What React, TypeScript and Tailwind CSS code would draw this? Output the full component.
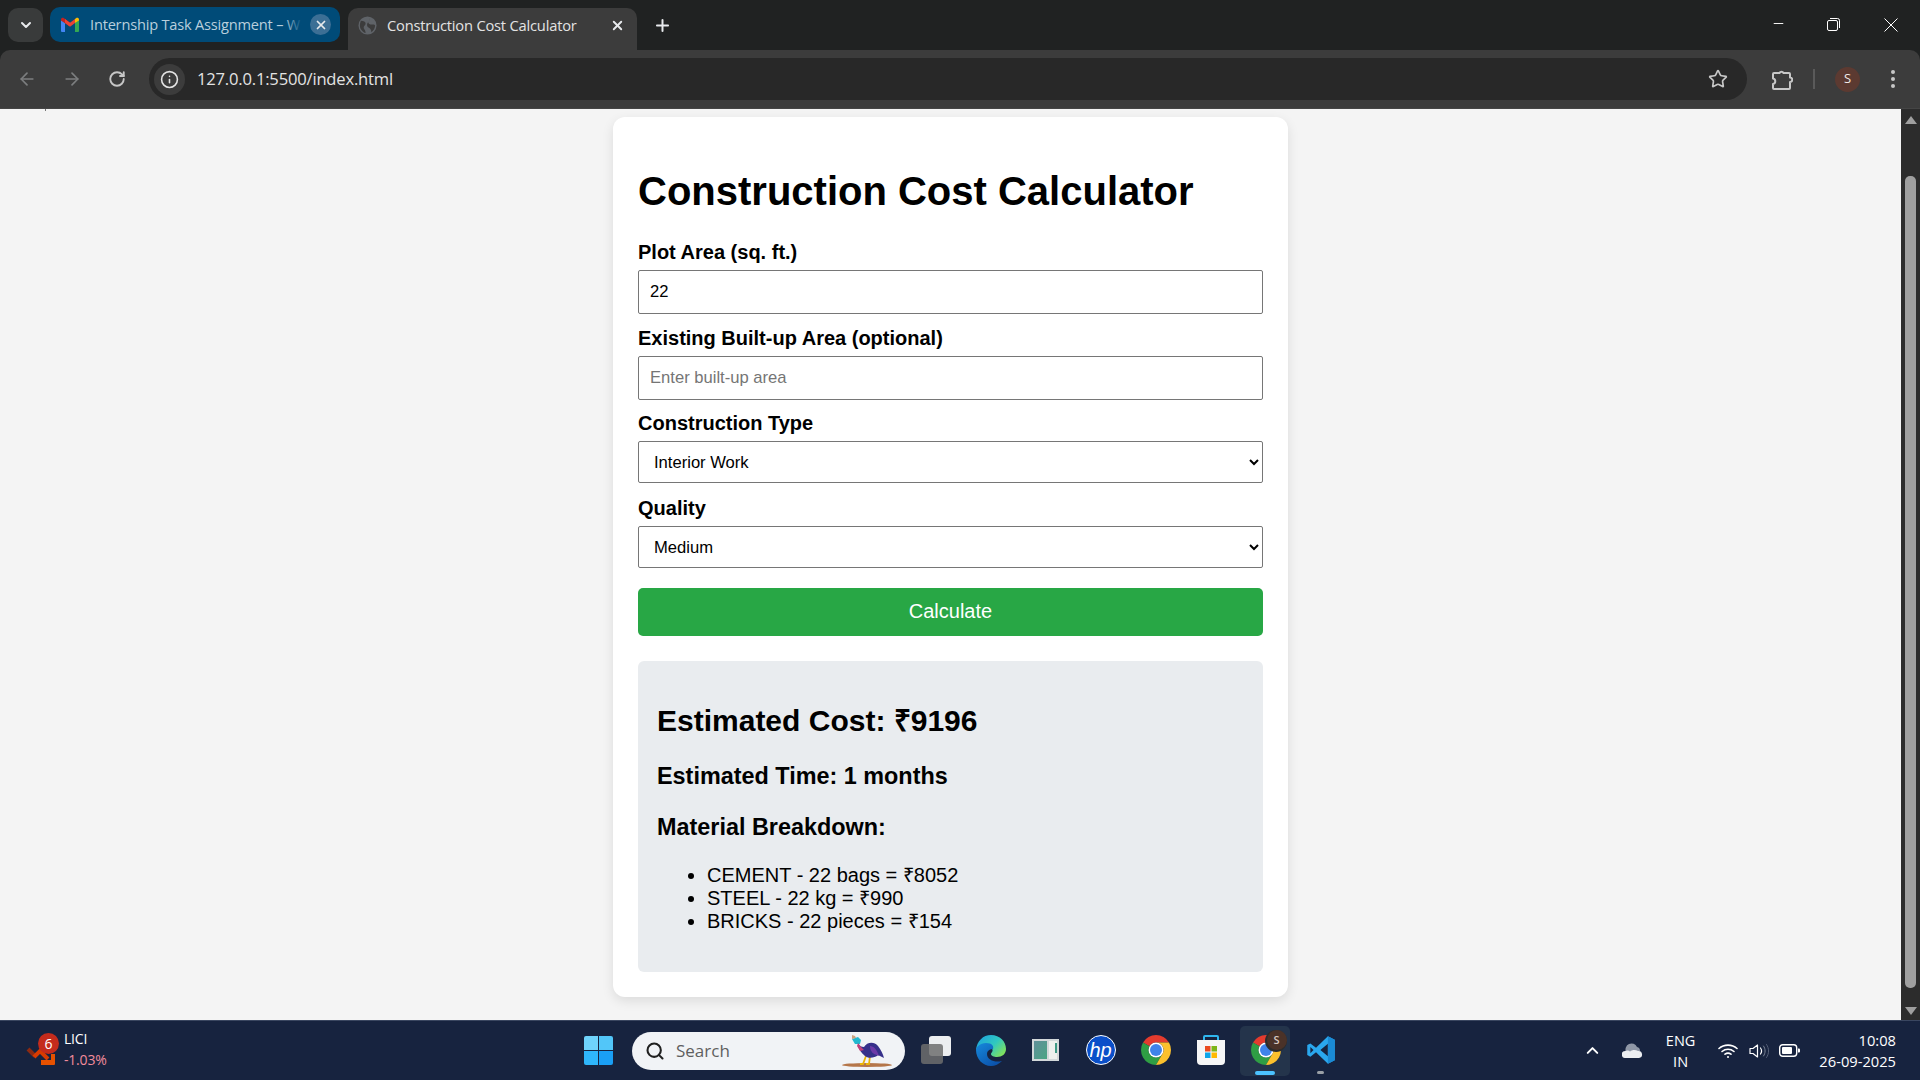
import { ChevronDown, X, Plus, ArrowLeft, ArrowRight, RotateCw, Info, Star, Minus, Search, ChevronUp } from 'lucide-react';

function GmailIcon() {
  return (
    <svg width="20" height="16" viewBox="0 0 20 16">
      <path d="M1 15V3l4 3v9H2a1 1 0 0 1-1-1z" fill="#4285f4" />
      <path d="M15 15V6l4-3v11a1 1 0 0 1-1 1z" fill="#34a853" />
      <path d="M1 3.500V2.500C1 1 2.800.3 4 1.200L10 5.800l-1 3z" fill="#c5221f" />
      <path d="M5 6 10 9.700 15 6V2l-5 3.800L5 2z" fill="#ea4335" />
      <path d="M15 2l1-.8C17.200.3 19 1 19 2.500v1L15 6z" fill="#fbbc04" />
    </svg>
  );
}

function GlobeIcon() {
  return (
    <svg width="19" height="19" viewBox="0 0 20 20">
      <circle cx="10" cy="10" r="9.500" fill="#5f6368" />
      <path d="M3 5c3 0 5 1 5 3s-2 2-2 4 2 2 2 6c-3-1-6-4-6-8 0-2 .5-3 1-5zM12 2c1 2 0 3-1 4s1 3 3 3 4 0 4 1c0 3-2 6-4 7 0-3-1-4-3-5s-2-4 0-6 1-3 1-4z" fill="#3c3c3c" />
    </svg>
  );
}

function PuzzleIcon() {
  return (
    <svg width="22" height="21" viewBox="0 0 22 21" fill="none" stroke="#c7c7c7" strokeWidth="2" strokeLinejoin="round">
      <path d="M3 4h5.500a2.200 2.200 0 0 1 4 0H18a1 1 0 0 1 1 1v3.500a2.200 2.200 0 0 1 0 4.500V19a1 1 0 0 1-1 1H3a1 1 0 0 1-1-1v-4a2.800 2.800 0 0 0 0-5.500V5a1 1 0 0 1 1-1z" />
    </svg>
  );
}

function ChromeIcon({ size }: { size: number }) {
  return (
    <svg width={size} height={size} viewBox="2 2 44 44">
      <path d="M4.950 13A22 22 0 0 1 43.050 13L24 13A11 11 0 0 0 14.470 18.500Z" fill="#e33b2e" />
      <path d="M24 46A22 22 0 0 1 4.950 13L14.470 18.500A11 11 0 0 0 33.530 29.500Z" fill="#2f9e44" />
      <path d="M43.050 13A22 22 0 0 1 24 46L33.530 29.500A11 11 0 0 0 24 13Z" fill="#fbc02d" />
      <circle cx="24" cy="24" r="11" fill="#fff" />
      <circle cx="24" cy="24" r="8.800" fill="#3f83ea" />
    </svg>
  );
}

function EdgeIcon() {
  return (
    <svg width="30" height="31" viewBox="0 0 30 31">
      <defs>
        <linearGradient id="edgeTop" x1="0" y1="0" x2="1" y2="0.700">
          <stop offset="0" stopColor="#1b9de2" />
          <stop offset="0.600" stopColor="#30c8c0" />
          <stop offset="1" stopColor="#7ee05f" />
        </linearGradient>
        <linearGradient id="edgeLow" x1="0" y1="0" x2="0.800" y2="1">
          <stop offset="0" stopColor="#1689dc" />
          <stop offset="1" stopColor="#0b4fa8" />
        </linearGradient>
      </defs>
      <path d="M0 15C1 6 7 0 15 0c9 0 15 6.500 15 14 0 5-4 8-9 8-3 0-6-1-6-3 0-1 1-1.500 1.500-3 .6-2-1.500-5-6-5C6 11 1 13 0 15z" fill="url(#edgeTop)" />
      <path d="M0 15c0-3 4-7 10-7 6 0 8 3 7 6-2 0-6 1-6 5 0 6 8 9 15 7-3 3-7 5-11 5C7 31 0 24 0 15z" fill="url(#edgeLow)" />
    </svg>
  );
}

function ExplorerIcon() {
  return (
    <div className="relative w-[30px] h-[28px]">
      <div className="absolute right-0 top-0 w-[22px] h-[20px] rounded-[3px] bg-[#eceef0]" />
      <div className="absolute left-0 bottom-0 w-[22px] h-[20px] rounded-[3px] bg-[#6d6d6d]/85" />
    </div>
  );
}

function WindowApp() {
  return (
    <div className="w-[27px] h-[22px] bg-[#d3d8da] p-[2px] flex gap-[2px]">
      <div className="flex-1 bg-gradient-to-br from-[#5f8f9a] to-[#49a583]" />
      <div className="w-[8px] bg-[#eef0ee] flex justify-end pt-[2px]">
        <div className="w-[2px] h-[10px] bg-[#3f9a86]" />
      </div>
    </div>
  );
}

function StoreIcon() {
  return (
    <svg width="30" height="32" viewBox="0 0 30 32">
      <path d="M8 7V3a1 1 0 0 1 1-1h12a1 1 0 0 1 1 1v4" fill="none" stroke="#2fb6ee" strokeWidth="2" />
      <path d="M1 6h28v21a4 4 0 0 1-4 4H5a4 4 0 0 1-4-4z" fill="#f6f6f6" />
      <rect x="9" y="12" width="5.500" height="5.500" fill="#ea4a1f" />
      <rect x="15.500" y="12" width="5.500" height="5.500" fill="#7cb518" />
      <rect x="9" y="18.500" width="5.500" height="5.500" fill="#0ea5e9" />
      <rect x="15.500" y="18.500" width="5.500" height="5.500" fill="#ffb900" />
    </svg>
  );
}

function VsCodeIcon() {
  return (
    <svg width="30" height="30" viewBox="0 0 24 24">
      <path fillRule="evenodd" d="M17.500 1 23 3.800v16.400L17.500 23 8 13.800l-4.500 3.500L1 16V8l2.500-1.300L8 10.200zM17.500 7 11.500 12l6 5zM3.500 9.500v5L6 12z" fill="#2aa7ee" />
      <path d="M17.500 1 23 3.800v16.400L17.500 23z" fill="#1a8ad4" />
    </svg>
  );
}

function WindowsIcon() {
  return (
    <div className="grid grid-cols-2 gap-[1px] w-[29px] h-[29px]">
      <div className="bg-[#6fd3fb] rounded-tl-[2px]" />
      <div className="bg-[#52c6f9] rounded-tr-[2px]" />
      <div className="bg-[#2fb6fb] rounded-bl-[2px]" />
      <div className="bg-[#1a9ff5] rounded-br-[2px]" />
    </div>
  );
}

function BirdIcon() {
  return (
    <svg width="54" height="36" viewBox="0 0 54 36">
      <ellipse cx="26" cy="32" rx="25" ry="2" fill="#b5764a" />
      <path d="M25 23l-3 8h-3M29 23l-1 8h-3" fill="none" stroke="#eab308" strokeWidth="1.800" />
      <path d="M17 10c2 3 3 4 6 4 3-5 10-6 14-1 3 4 5 8 6 12l-6-3c-3 3-10 4-13 1-4-3-6-7-7-11z" fill="#36308a" />
      <path d="M29 13c4 0 7 4 9 10l-5-2c-3-2-4-5-4-8z" fill="#6d3aa8" />
      <path d="M11 6l6-2 3 3-1 4-5 0z" fill="#22b8cf" />
      <path d="M11 2l3 1 1 2-4 1z" fill="#c9a27e" />
      <path d="M17 10l3 4 3 3-4 1-3-5z" fill="#c2417a" />
    </svg>
  );
}

function LiciIcon() {
  return (
    <svg width="30" height="20" viewBox="0 0 30 20" fill="none">
      <path d="M2 3l7 7" stroke="#8c2a12" strokeWidth="4" />
      <path d="M8 11l6-6 8 8" stroke="#d83b01" strokeWidth="4" />
      <path d="M25 8h4v10a1 1 0 0 1-1 1H15v-5h10z" fill="#e65100" />
    </svg>
  );
}

function CloudIcon() {
  return (
    <svg width="21" height="15" viewBox="0 0 21 15">
      <path d="M4 9a6 6 0 0 1 11-5 4 4 0 0 1 3 4z" fill="#8f97a6" />
      <path d="M3.500 15a3.500 3.500 0 0 1-.5-7c2-1 4-.5 5 .5 2-1.500 5-2 8-.5a3.500 3.500 0 0 1 1 7z" fill="#eceef1" />
    </svg>
  );
}

function WifiIcon() {
  return (
    <svg width="20" height="16" viewBox="0 0 20 16" fill="none" stroke="#fff" strokeWidth="1.600" strokeLinecap="round">
      <path d="M1 5.500C6 1 14 1 19 5.500" />
      <path d="M4 8.500c3.500-3 8.500-3 12 0" />
      <path d="M7 11.200c2-1.500 4-1.500 6 0" />
      <circle cx="10" cy="14" r="1" fill="#fff" stroke="none" />
    </svg>
  );
}

function VolumeIcon() {
  return (
    <svg width="21" height="16" viewBox="0 0 21 16" fill="none" strokeLinecap="round">
      <path d="M1 5.500h3L8.500 2v12L4 10.500H1z" stroke="#fff" strokeWidth="1.200" strokeLinejoin="round" />
      <path d="M11.500 5c1.300 1.800 1.300 4.200 0 6" stroke="#fff" strokeWidth="1.200" />
      <path d="M14.500 3c2.200 3 2.200 7 0 10" stroke="#7b8496" strokeWidth="1" />
      <path d="M17.500 1.500c2.800 4 2.800 9 0 13" stroke="#566078" strokeWidth="1" />
    </svg>
  );
}

function BatteryIcon() {
  return (
    <svg width="21" height="13" viewBox="0 0 21 13">
      <rect x="0.700" y="0.700" width="17" height="11.600" rx="3" fill="none" stroke="#fff" strokeWidth="1.400" />
      <rect x="3" y="3" width="10" height="7" rx="1" fill="#fff" />
      <path d="M19 4.500h1a1 1 0 0 1 1 1v2a1 1 0 0 1-1 1h-1z" fill="#fff" />
    </svg>
  );
}

function PinnedApp({ children, active, dot }: { children: React.ReactNode; active?: boolean; dot?: boolean }) {
  return (
    <div className="relative w-[55px] h-[50px] flex items-center justify-center">
      {active && <div className="absolute inset-y-0 left-[2px] right-[3px] bg-[#24344b] rounded-[5px]" />}
      <div className="relative flex items-center justify-center -mt-[1px]">{children}</div>
      {active && <div className="absolute bottom-[1px] left-[17px] w-[20px] h-[4px] rounded-full bg-[#4cc2ff]" />}
      {dot && <div className="absolute bottom-[2px] left-[24px] w-[7px] h-[3px] rounded-full bg-[#9aa0a6]" />}
    </div>
  );
}

function TabBar() {
  return (
    <div className="h-[50px] shrink-0 bg-[#202222] flex pl-[8px] font-['Open_Sans',sans-serif]">
      <div className="w-[35px] h-[34px] mt-[8px] rounded-[10px] bg-[#393b3b] flex items-center justify-center text-[#e8eaed]">
        <ChevronDown size={16} strokeWidth={3} />
      </div>
      <div className="w-[290px] h-[35px] mt-[7px] ml-[7px] rounded-[10px] bg-[#004b78] flex items-center pl-[10px] pr-[9px]">
        <GmailIcon />
        <span className="relative ml-[10px] w-[212px] overflow-hidden whitespace-nowrap text-[14.600px] text-[#b9cfdd] tracking-[-0.2px]">
          Internship Task Assignment – W
          <span className="absolute inset-y-0 right-0 w-[18px] bg-gradient-to-r from-transparent to-[#004b78]" />
        </span>
        <span className="ml-auto w-[21px] h-[21px] rounded-full bg-[#3c6f95] flex items-center justify-center text-[#e8eaed]">
          <X size={14} strokeWidth={3} />
        </span>
      </div>
      <div className="w-[289px] h-[42px] mt-[8px] ml-[8px] rounded-t-[10px] bg-[#3c3c3c] flex items-center pl-[10px] pr-[12px] pb-[7px]">
        <GlobeIcon />
        <span className="ml-[10px] whitespace-nowrap text-[14.700px] text-[#e3e3e3] tracking-[-0.2px]">Construction Cost Calculator</span>
        <X size={15} strokeWidth={3} className="ml-auto text-[#e8eaed]" />
      </div>
      <Plus size={19} strokeWidth={2.500} className="ml-[16px] mt-[16px] text-[#e8eaed]" />
      <div className="ml-auto flex items-start text-white">
        <Minus size={15} strokeWidth={1.500} className="mt-[16px] mr-[41px]" />
        <svg width="13" height="13" viewBox="0 0 13 13" className="mt-[18px] mr-[44px]" fill="none" stroke="#fff" strokeWidth="1">
          <rect x="0.500" y="2.500" width="10" height="10" rx="1.500" />
          <path d="M3 .5h7.500a2 2 0 0 1 2 2V10" />
        </svg>
        <svg width="14" height="14" viewBox="0 0 14 14" className="mt-[18px] mr-[22px]" stroke="#fff" strokeWidth="1">
          <path d="M.5.5l13 13M13.500.5l-13 13" />
        </svg>
      </div>
    </div>
  );
}

function Toolbar() {
  return (
    <div className="h-[59px] shrink-0 bg-[#202222] font-['Open_Sans',sans-serif]">
      <div className="h-full bg-[#3c3c3c] rounded-t-[10px] border-b border-[#454545] flex items-center">
        <ArrowLeft size={20} className="ml-[17px] text-[#7c7e7f]" />
        <ArrowRight size={20} className="ml-[25px] text-[#7c7e7f]" />
        <RotateCw size={18} strokeWidth={2.500} className="ml-[26px] text-[#c7c7c7]" />
        <div className="ml-[23px] w-[1598px] h-[42px] rounded-full bg-[#282828] flex items-center pl-[5px] pr-[19px]">
          <span className="w-[31px] h-[31px] rounded-full bg-[#3c3c3c] flex items-center justify-center text-[#e3e3e3]">
            <Info size={19} />
          </span>
          <span className="ml-[12px] text-[16.600px] text-[#e3e3e3] tracking-[-0.2px]">127.0.0.1:5500/index.html</span>
          <Star size={20} strokeWidth={2} className="ml-auto text-[#c7c7c7]" />
        </div>
        <div className="ml-[24px]"><PuzzleIcon /></div>
        <div className="ml-[20px] w-[2px] h-[20px] bg-[#5a5a5a]" />
        <div className="ml-[20px] w-[25px] h-[25px] rounded-full bg-[#5c3a31] flex items-center justify-center text-[13px] text-[#f1e9e6]">S</div>
        <div className="ml-[31px] flex flex-col gap-[3px]">
          <span className="w-[4px] h-[4px] rounded-full bg-[#c7c7c7]" />
          <span className="w-[4px] h-[4px] rounded-full bg-[#c7c7c7]" />
          <span className="w-[4px] h-[4px] rounded-full bg-[#c7c7c7]" />
        </div>
      </div>
    </div>
  );
}

function Field({ label, children, className }: { label: string; children: React.ReactNode; className?: string }) {
  return (
    <div className={className}>
      <label className="block h-[23px] leading-[23px] mb-[6px] text-[20px] font-bold text-black">{label}</label>
      {children}
    </div>
  );
}

function Calculator() {
  return (
    <div className="w-[675px] h-[880px] mx-auto mt-[8px] px-[25px] bg-white rounded-[12px] shadow-[0_4px_12px_rgba(0,0,0,0.1)] font-['Liberation_Sans',Arial,sans-serif] text-black">
      <h1 className="pt-[51px] text-[40px] leading-[46px] font-bold">Construction Cost Calculator</h1>
      <Field label="Plot Area (sq. ft.)" className="mt-[27px]">
        <input readOnly value="22" className="block w-full h-[44px] px-[11px] border border-[#767676] rounded-[2px] text-[16.600px] text-black" />
      </Field>
      <Field label="Existing Built-up Area (optional)" className="mt-[13px]">
        <input readOnly placeholder="Enter built-up area" className="block w-full h-[44px] px-[11px] border border-[#767676] rounded-[2px] text-[16.600px] placeholder:text-[#757575]" />
      </Field>
      <Field label="Construction Type" className="mt-[12px]">
        <select defaultValue="Interior Work" className="block w-full h-[42px] pl-[11px] pr-[13px] border border-[#767676] rounded-[2px] bg-white text-[16.600px] text-black">
          <option>Interior Work</option>
        </select>
      </Field>
      <Field label="Quality" className="mt-[14px]">
        <select defaultValue="Medium" className="block w-full h-[42px] pl-[11px] pr-[13px] border border-[#767676] rounded-[2px] bg-white text-[16.600px] text-black">
          <option>Medium</option>
        </select>
      </Field>
      <button className="block w-full h-[48px] pb-[2px] mt-[20px] rounded-[5px] bg-[#28a745] text-white text-[20px]">Calculate</button>
      <div className="h-[311px] mt-[25px] pt-[42px] pl-[19px] rounded-[6px] bg-[#e9ecef]">
        <h2 className="text-[30px] leading-[35px] font-bold">Estimated Cost: ₹9196</h2>
        <h3 className="mt-[25px] text-[23.400px] leading-[27px] font-bold">Estimated Time: 1 months</h3>
        <h3 className="mt-[24px] text-[23.400px] leading-[27px] font-bold">Material Breakdown:</h3>
        <ul className="mt-[23px] pl-[50px] list-disc text-[20px] leading-[23px]">
          <li>CEMENT - 22 bags = ₹8052</li>
          <li>STEEL - 22 kg = ₹990</li>
          <li>BRICKS - 22 pieces = ₹154</li>
        </ul>
      </div>
    </div>
  );
}

function Scrollbar() {
  return (
    <div className="w-[19px] shrink-0 bg-[#2c2c2c] flex flex-col items-center">
      <div className="mt-[7px] w-0 h-0 border-x-[6px] border-x-transparent border-b-[8px] border-b-[#9f9f9f]" />
      <div className="mt-[52px] w-[11px] h-[812px] rounded-[5px] bg-[#9f9f9f]" />
      <div className="mt-[19px] w-0 h-0 border-x-[6px] border-x-transparent border-t-[8px] border-t-[#9f9f9f]" />
    </div>
  );
}

function Taskbar() {
  return (
    <div className="h-[60px] shrink-0 bg-[#17233f] border-t border-[#3a4660] flex items-center font-['Open_Sans',sans-serif] text-white">
      <div className="w-[584px] shrink-0 pl-[26px] flex items-center">
        <div className="relative w-[32px] h-[36px]">
          <div className="absolute left-0 top-[13px]"><LiciIcon /></div>
          <div className="absolute left-[12px] top-[0px] w-[21px] h-[21px] rounded-full bg-[#c42b1c] flex items-center justify-center text-[14px]">6</div>
        </div>
        <div className="ml-[6px] flex flex-col text-[14px] leading-[21px] tracking-[-0.2px] -mt-[3px]">
          <span>LICI</span>
          <span className="text-[#f28b9b]">-1.03%</span>
        </div>
      </div>
      <WindowsIcon />
      <div className="ml-[19px] w-[273px] h-[38px] rounded-full bg-[#f1f3f6] flex items-center pl-[13px] overflow-hidden">
        <Search size={20} strokeWidth={2.500} className="text-[#202020]" />
        <span className="ml-[11px] text-[17px] text-[#5f5f5f]">Search</span>
        <div className="ml-auto mr-[10px]"><BirdIcon /></div>
      </div>
      <div className="ml-[3px] flex items-center">
        <PinnedApp><ExplorerIcon /></PinnedApp>
        <PinnedApp><EdgeIcon /></PinnedApp>
        <PinnedApp><WindowApp /></PinnedApp>
        <PinnedApp>
          <div className="w-[30px] h-[30px] rounded-full bg-[#0a4fc9] border-[1.500px] border-white flex items-center justify-center text-[20px] leading-none italic text-white font-['Liberation_Sans',sans-serif]">hp</div>
        </PinnedApp>
        <PinnedApp><ChromeIcon size={30} /></PinnedApp>
        <PinnedApp><StoreIcon /></PinnedApp>
        <PinnedApp active>
          <ChromeIcon size={30} />
          <div className="absolute -right-[6px] -top-[5px] w-[20px] h-[20px] rounded-full bg-[#4a3228] shadow-[-1px_1px_0_1px_#2c2c2c] flex items-center justify-center text-[11px] font-semibold text-[#d7c8c2]">S</div>
        </PinnedApp>
        <PinnedApp dot><VsCodeIcon /></PinnedApp>
      </div>
      <div className="ml-auto pr-[24px] flex items-center">
        <ChevronUp size={19} strokeWidth={2.500} className="text-white" />
        <div className="ml-[20px]"><CloudIcon /></div>
        <div className="ml-[23px] flex flex-col items-center text-[14.500px] leading-[21px]">
          <span>ENG</span>
          <span>IN</span>
        </div>
        <div className="ml-[23px]"><WifiIcon /></div>
        <div className="ml-[11px]"><VolumeIcon /></div>
        <div className="ml-[9px]"><BatteryIcon /></div>
        <div className="ml-[19px] flex flex-col items-end text-[14.700px] leading-[21px]">
          <span>10:08</span>
          <span>26-09-2025</span>
        </div>
      </div>
    </div>
  );
}

export default function App() {
  return (
    <div className="w-[1920px] h-[1080px] overflow-hidden flex flex-col bg-[#f4f4f4]">
      <TabBar />
      <Toolbar />
      <div className="flex-1 min-h-0 flex">
        <div className="relative flex-1 min-w-0 overflow-hidden">
          <div className="absolute left-[45px] top-0 w-[1px] h-[2px] bg-[#777]" />
          <Calculator />
        </div>
        <Scrollbar />
      </div>
      <Taskbar />
    </div>
  );
}
